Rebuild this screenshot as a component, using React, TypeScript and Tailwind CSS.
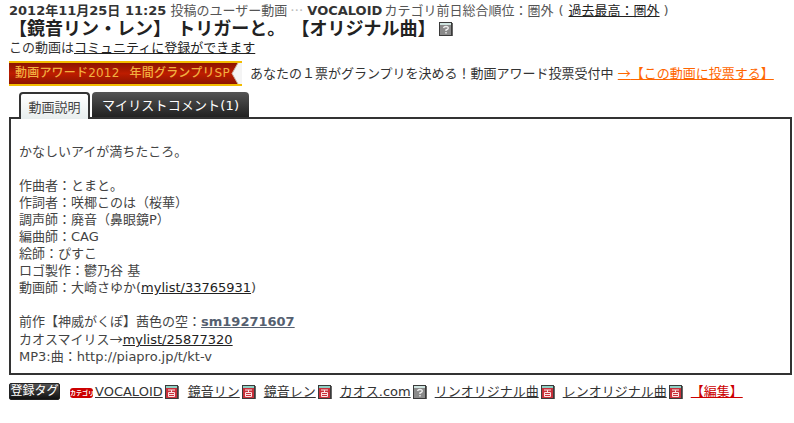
import type { ReactNode } from "react";

const FONT = "font-['DejaVu_Sans','Noto_Sans_CJK_JP',sans-serif]";
const CJK = "font-['Noto_Sans_CJK_JP',sans-serif]";

const DicIcon = ({ gray = false }: { gray?: boolean }) => (
  <svg width="14" height="14" viewBox="0 0 14 14" className="inline-block shrink-0">
    <rect x="0" y="0" width="13" height="14" fill="#3a3a3a" />
    <rect x="13" y="1" width="1" height="13" fill="#666" />
    <rect x="1" y="1" width="11" height="2" fill={gray ? "#cfe4e0" : "#8fd0c4"} />
    <rect x="1" y="3" width="11" height="10" fill={gray ? "#8a8a8a" : "#c8303a"} />
    {gray ? (
      <path d="M4.5 6 Q5 4.5 7 4.5 Q9.5 4.5 9.2 6.3 Q9 7.3 7 8 V9 M7 10 V11.5" fill="none" stroke="#eee" strokeWidth="1.4" />
    ) : (
      <path d="M3 5 H10 M6.5 5 V7 M3.5 7.5 H9.5 V11.5 H3.5 Z M3.5 9.5 H9.5" fill="none" stroke="#fbe4e4" strokeWidth="1" />
    )}
  </svg>
);

const Tag = ({ children, gray, lead }: { children: ReactNode; gray?: boolean; lead?: ReactNode }) => (
  <span className="flex items-center">
    {lead}
    <a className="underline text-[#333]">{children}</a>
    <span className="ml-[2px] mt-[2px] flex">
      <DicIcon gray={gray} />
    </span>
  </span>
);

export default function App() {
  return (
    <div className={`${FONT} w-[794px] h-[423px] bg-white text-[#333] text-[13px] leading-[17px] pl-[9px] pr-[2px] overflow-hidden`}>
      <p className="h-[19px] pt-[1px] whitespace-nowrap text-[#555]">
        <strong className="text-[#333]">2012年11月25日 11:25</strong> 投稿のユーザー動画
        <span className={`${CJK} ml-[3px] text-[#bbb]`}>…</span>{" "}
        <strong className="text-[#333]">VOCALOID</strong> <span className="-ml-[2px]">カテゴリ前日総合順位：圏外</span>
        <span className="ml-[5px]">(</span>
        <a className="ml-[5px] underline text-[#222]">過去最高：圏外</a>
        <span className="ml-[4px]">)</span>
      </p>
      <h1 className="h-[19px] flex items-center text-[18px] leading-[19px] font-bold whitespace-nowrap text-[#222]">
        【鏡音リン・レン】 トリガーと。 【オリジナル曲】
        <span className="ml-[3px] mt-[1px] flex">
          <DicIcon gray />
        </span>
      </h1>
      <p className="h-[20px] pt-[1px]">
        この動画は<a className="underline text-[#222]">コミュニティに登録ができます</a>
      </p>
      <div className="flex items-center h-[26px] mt-[2px]">
        <div className="relative w-[233px] h-[25px] border-y-[2px] border-[#f2bc00] bg-gradient-to-b from-[#8c1400] via-[#bd1c00] to-[#8c1400] text-[#f2b040] text-[12px] leading-[21px] pl-[6px] whitespace-nowrap font-medium tracking-[0.2px]">
          動画アワード2012<span className="ml-[10px]">年間グランプリSP</span>
          <svg width="11" height="21" viewBox="0 0 11 21" className="absolute right-0 top-0">
            <path d="M11 0 L7 0 L1 10.5 L7 21 L11 21 Z" fill="#f4f4f4" />
            <path d="M7 0 L1 10.5 L7 21" fill="none" stroke="#c9b0a0" strokeWidth="1" />
          </svg>
        </div>
        <span className="ml-[8px] whitespace-nowrap">
          あなたの１票がグランプリを決める！動画アワード投票受付中{" "}
          <a className="underline text-[#ff6600]">
            <span className={CJK}>→</span>【この動画に投票する】
          </a>
        </span>
      </div>
      <div className="flex items-end h-[33px] pl-[10px] -mb-[2px] relative z-10">
        <div className="w-[71px] h-[27px] pt-[2px] bg-gradient-to-b from-white to-[#e8eeee] border-2 border-b-0 border-[#333] rounded-t-[4px] flex items-center justify-center text-[#444]">
          動画説明
        </div>
        <div className="ml-[2px] w-[157px] h-[25px] mb-[2px] pt-[2px] bg-gradient-to-b from-[#555] to-[#222] rounded-t-[4px] flex items-center justify-center text-white text-[13px] tracking-[0.15px]">
          マイリストコメント(1)
        </div>
      </div>
      <div className="w-[783px] h-[258px] border-2 border-[#333] pl-[8px] pt-[24px] text-[#444] whitespace-nowrap">
        <p>かなしいアイが満ちたころ。</p>
        <p className="mt-[17px]">作曲者：とまと。</p>
        <p>作詞者：咲椰このは（桜華）</p>
        <p>調声師：廃音（鼻眼鏡P）</p>
        <p>編曲師：CAG</p>
        <p>絵師：ぴすこ</p>
        <p>ロゴ製作：鬱乃谷 基</p>
        <p>
          動画師：大崎さゆか(<a className="underline text-[#222]">mylist/33765931</a>)
        </p>
        <p className="mt-[17px]">
          前作【神威がくぽ】茜色の空：<a className="underline font-bold text-[#556070]">sm19271607</a>
        </p>
        <p>
          カオスマイリス<span className={CJK}>→</span>
          <a className="underline text-[#222]">mylist/25877320</a>
        </p>
        <p>MP3:曲：http://piapro.jp/t/kt-v</p>
      </div>
      <div className="flex items-center mt-[7px] h-[18px] whitespace-nowrap">
        <span className="w-[51px] h-[17px] bg-gradient-to-b from-[#555] to-[#111] border border-[#222] rounded-[2px] text-white text-[12px] leading-[15px] text-center">
          登録タグ
        </span>
        <div className="flex items-center gap-[8px] ml-[10px]">
          <Tag
            lead={
              <span className="w-[23px] h-[10px] mr-[2px] mt-[3px] bg-[#cc0000] rounded-[3px] text-white text-[6px] leading-[10px] text-center font-bold overflow-hidden">
                カテゴリ
              </span>
            }
          >
            VOCALOID
          </Tag>
          <span className="ml-[1px]">
            <Tag>鏡音リン</Tag>
          </span>
          <Tag>鏡音レン</Tag>
          <Tag gray>カオス.com</Tag>
          <Tag>リンオリジナル曲</Tag>
          <Tag>レンオリジナル曲</Tag>
          <a className="underline text-[#cc0000]">【編集】</a>
        </div>
      </div>
    </div>
  );
}
